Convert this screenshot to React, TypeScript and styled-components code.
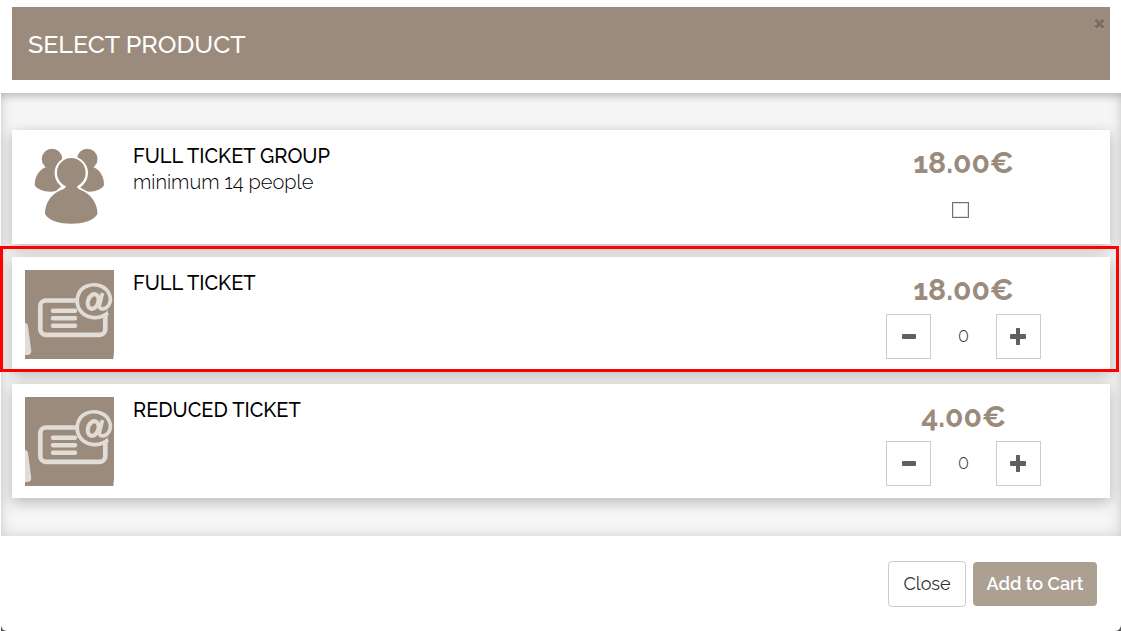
import React, { useState } from "react";
import styled, { createGlobalStyle } from "styled-components";

const taupe = "#9b8b7c";
const pale = "#e2dcd6";

const GlobalStyle = createGlobalStyle`
  *, *::before, *::after { box-sizing: border-box; }
  body {
    margin: 0;
    background: #fff;
    color: #000;
    font-family: Raleway, Lato, "Open Sans", sans-serif;
    font-size: 20px;
    line-height: 26px;
  }
  button, input { font-family: inherit; }
`;

const Backdrop = styled.div`
  border-left: 1px solid #fff;
  background: #555;
`;

const Modal = styled.main`
  display: flex;
  flex-direction: column;
  background: #fff;
  border-radius: 0 0 6px 6px;
`;

const Header = styled.header`
  padding: 7px 11px 13px;
`;

const Banner = styled.div`
  display: flex;
  justify-content: space-between;
  align-items: flex-start;
  padding: 8px 5px 0 16px;
  height: 73px;
  background: ${taupe};
`;

const Title = styled.h1`
  margin: 13px 0 0;
  color: #fff;
  font-size: 25px;
  font-weight: 500;
  line-height: 32px;
`;

const Dismiss = styled.button`
  display: flex;
  padding: 3px 0;
  border: 0;
  background: none;
  cursor: pointer;
`;

const Body = styled.section`
  display: flex;
  flex-direction: column;
  gap: 13px;
  padding: 37px 11px 38px;
  background: #f6f6f6;
  box-shadow:
    inset 0 0 14px rgba(0, 0, 0, 0.16),
    inset 0 6px 8px -4px rgba(0, 0, 0, 0.18);
`;

const Card = styled.article<{ $marked?: boolean }>`
  position: relative;
  display: grid;
  grid-template-columns: 89px minmax(0, 1fr) 27%;
  column-gap: 19px;
  height: 114px;
  padding: 13px 0 12px 13px;
  background: #fff;
  box-shadow: 0 4px 14px rgba(0, 0, 0, 0.26);

  ${({ $marked }) =>
    $marked &&
    `
    &::after {
      content: "";
      position: absolute;
      z-index: 1;
      inset: -11px -9px -1px -12px;
      border: 3px solid #f00;
      pointer-events: none;
    }
  `}
`;

const Picture = styled.svg`
  display: block;
  width: 89px;
  height: 89px;
`;

const Name = styled.h2`
  margin: 0;
  font-size: 20px;
  font-weight: 500;
  line-height: 26px;
`;

const Note = styled.p`
  margin: 0;
  font-size: 20px;
  font-weight: 300;
  line-height: 26px;
`;

const Purchase = styled.div`
  display: flex;
  flex-direction: column;
  align-items: center;
  gap: 4px;
`;

const Price = styled.div`
  color: ${taupe};
  font-size: 30px;
  font-weight: 700;
  line-height: 40px;
`;

const Tick = styled.input`
  appearance: none;
  width: 17px;
  height: 16px;
  margin: 15px 6px 0 0;
  border: 1px solid #707070;
  background: #fff;
  box-shadow: inset 0 0 0 1px #e0e0e0;

  &:checked { background: ${taupe}; }
`;

const Stepper = styled.div`
  display: grid;
  grid-template-columns: 45px 65px 45px;
`;

const StepButton = styled.button`
  display: flex;
  align-items: center;
  justify-content: center;
  height: 45px;
  padding: 0;
  border: 1px solid #ccc;
  background: #fff;
  cursor: pointer;
`;

const Count = styled.output`
  color: #333;
  font-size: 18px;
  font-weight: 300;
  line-height: 44px;
  text-align: center;
`;

const Footer = styled.footer`
  display: flex;
  justify-content: flex-end;
  align-items: center;
  gap: 7px;
  padding: 25px 24px 24px;
`;

const Action = styled.button<{ $primary?: boolean }>`
  height: ${({ $primary }) => ($primary ? 44 : 46)}px;
  width: ${({ $primary }) => ($primary ? 124 : 78)}px;
  padding: 0;
  border: ${({ $primary }) => ($primary ? "0" : "1px solid #ccc")};
  border-radius: 4px;
  background: ${({ $primary }) => ($primary ? "#aca093" : "#fff")};
  color: ${({ $primary }) => ($primary ? "#fff" : "#333")};
  font-size: 18px;
  font-weight: ${({ $primary }) => ($primary ? 600 : 400)};
  line-height: 26px;
  cursor: pointer;
`;

const GroupPicture = () => (
  <Picture viewBox="0 0 89 89" aria-hidden="true">
    <g fill={taupe}>
      <circle cx="27" cy="16" r="10.3" />
      <circle cx="62.3" cy="16" r="10.3" />
      <path d="M21 24C14 27 9.700 33 9.700 42C12 47 22 50 31 48L40 40V24Z" />
      <path d="M68 24C75 27 79 33 79 42C77 47 67 50 59 48L50 40V24Z" />
    </g>
    <path d="M35 42L37.500 44.500L28 50H65L55 44.500L58 42Z" fill="#fff" />
    <circle cx="46.300" cy="30" r="16.700" fill="#fff" />
    <g fill={taupe}>
      <ellipse cx="46.300" cy="29.700" rx="14.300" ry="14.700" />
      <path d="M41 42C41 45 39 46 36 47C26 51 20 60 20 71C24 78 35 80.700 46.300 80.700C58 80.700 68 78 72.500 71C72.500 60 66 51 56 47C53 46 52 45 52 42Z" />
    </g>
  </Picture>
);

const TicketPicture = () => (
  <Picture viewBox="0 0 89 89" aria-hidden="true">
    <rect width="89" height="89" fill={taupe} />
    <path d="M0 53Q2.500 53 3 56L6.300 81Q6.300 85 2 85H0ZM89 82V89H88Z" fill={pale} />
    <g fill="none" stroke={pale} strokeLinecap="round">
      <rect x="15.300" y="30.500" width="65" height="34.300" rx="5.500" strokeWidth="4.700" />
      <path d="M28 40.700H50M28 48.200H50M28 55.700H50" strokeWidth="4.500" />
    </g>
    <circle cx="69" cy="31" r="16.500" fill={taupe} />
    <g fill="none" stroke={pale}>
      <path
        d="M83 43C73 50.500 60 48.500 54.500 39.500C49.500 30.500 53 19.500 61.500 16.200C71 12.500 82 16.500 84.800 25.500C87 32.500 82.500 39 77.500 39C74.500 39 74 37 74.600 34.500L77.500 23"
        strokeWidth="3.700"
      />
      <ellipse cx="68.200" cy="31.500" rx="5.200" ry="7.500" transform="rotate(20 68.200 31.500)" strokeWidth="4.200" />
    </g>
  </Picture>
);

const StepIcon = ({ plus }: { plus?: boolean }) => (
  <svg width="19" height="19" viewBox="0 0 19 19" fill="#606060" aria-hidden="true">
    {plus ? (
      <path d="M7.500 1H10.500Q11 1 11 1.500V7H16Q17 7 17 8V11Q17 12 16 12H11V17.500Q11 18 10.500 18H7.500Q7 18 7 17.500V12H2Q1 12 1 11V8Q1 7 2 7H7V1.500Q7 1 7.500 1Z" />
    ) : (
      <rect x="3" y="7" width="14" height="5" rx="1" />
    )}
  </svg>
);

const QuantityPicker = ({ product }: { product: string }) => {
  const [count, setCount] = useState(0);
  return (
    <Stepper>
      <StepButton
        type="button"
        aria-label={`Remove one ${product}`}
        onClick={() => setCount(Math.max(0, count - 1))}
      >
        <StepIcon />
      </StepButton>
      <Count>{count}</Count>
      <StepButton type="button" aria-label={`Add one ${product}`} onClick={() => setCount(count + 1)}>
        <StepIcon plus />
      </StepButton>
    </Stepper>
  );
};

const products = [
  { name: "FULL TICKET GROUP", note: "minimum 14 people", price: "18.00€", group: true },
  { name: "FULL TICKET", price: "18.00€", marked: true },
  { name: "REDUCED TICKET", price: "4.00€" },
];

export default function App() {
  return (
    <Backdrop>
      <GlobalStyle />
      <Modal>
        <Header>
          <Banner>
            <Title>SELECT PRODUCT</Title>
            <Dismiss type="button" aria-label="Dismiss">
              <svg width="11" height="12" viewBox="0 0 11 12" aria-hidden="true">
                <path d="M1.500 3L9.500 11M9.500 3L1.500 11" stroke="#b3a89d" strokeWidth="3.600" />
                <path d="M1.500 2L9.500 10M9.500 2L1.500 10" stroke="#7b6f63" strokeWidth="3.600" />
              </svg>
            </Dismiss>
          </Banner>
        </Header>
        <Body>
          {products.map(({ name, note, price, group, marked }) => (
            <Card key={name} $marked={marked}>
              {group ? <GroupPicture /> : <TicketPicture />}
              <div>
                <Name>{name}</Name>
                {note && <Note>{note}</Note>}
              </div>
              <Purchase>
                <Price>{price}</Price>
                {group ? <Tick type="checkbox" aria-label={name} /> : <QuantityPicker product={name} />}
              </Purchase>
            </Card>
          ))}
        </Body>
        <Footer>
          <Action type="button">Close</Action>
          <Action type="button" $primary>
            Add to Cart
          </Action>
        </Footer>
      </Modal>
    </Backdrop>
  );
}
